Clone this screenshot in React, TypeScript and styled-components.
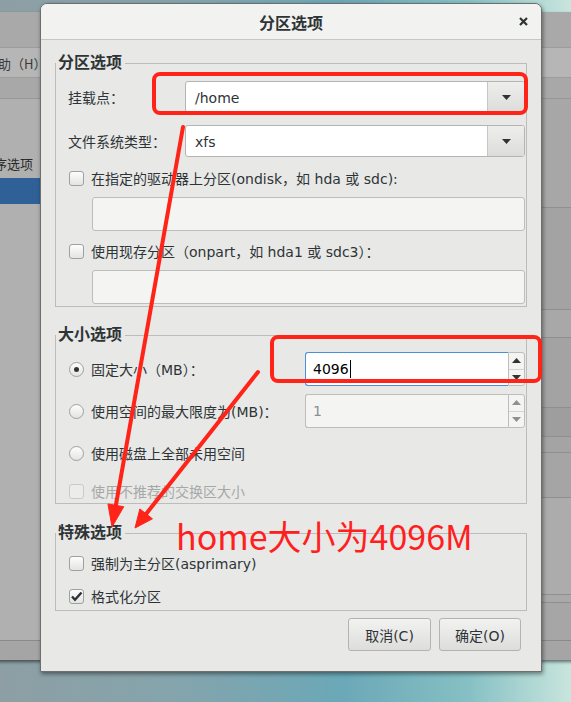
import React from "react";
import styled, { createGlobalStyle } from "styled-components";

const GlobalStyle = createGlobalStyle`
  html, body {
    margin: 0;
    padding: 0;
  }
  body {
    font-family: "DejaVu Sans", "Noto Sans CJK SC", sans-serif;
  }
`;

const Desktop = styled.div`
  position: relative;
  width: 571px;
  height: 702px;
  overflow: hidden;
  background: linear-gradient(90deg, #8d9fa4 0%, #85a4ac 30%, #6ba8b7 60%, #86c0c4 82%, #c8e5dd 100%);
`;

/* installer main window, mostly hidden behind the dialog */
const BackWindow = styled.div`
  position: absolute;
  left: -20px;
  top: 12px;
  width: 640px;
  height: 648px;
  display: flex;
  flex-direction: column;
  background: #aaaaaa;
  box-shadow: 0 2px 3px rgba(0, 0, 0, 0.5);
  font-family: "Noto Sans CJK SC", "DejaVu Sans", sans-serif;
  font-size: 13px;
  color: #333;
`;

const BackHeader = styled.div`
  height: 35px;
  background: #a9a9a9;
`;

const MenuBar = styled.div`
  height: 31px;
  box-sizing: border-box;
  padding: 2px 0 0 5px;
  display: flex;
  align-items: center;
  background: #b6b6b6;
  border-top: 1px solid #9c9c9c;
  border-bottom: 1px solid #9c9c9c;
  color: #3a3a3a;
`;

const ToolBand = styled.div`
  height: 21px;
  box-sizing: border-box;
  background: #a8a8a8;
  border-bottom: 1px solid #979797;
`;

const BackMain = styled.div`
  flex: 1;
  display: flex;
`;

const Sidebar = styled.div`
  width: 562px;
  padding-top: 51px;
  background: #b0b0b0;
`;

const ListRow = styled.div<{ $selected?: boolean }>`
  height: 26px;
  margin-bottom: 2px;
  padding-left: 1px;
  display: flex;
  align-items: center;
  background: ${(p) => (p.$selected ? "#2f6198" : "transparent")};
  color: ${(p) => (p.$selected ? "#fff" : "#2a2a2a")};
`;

const ContentPane = styled.div`
  flex: 1;
  display: flex;
  flex-direction: column;
  background: #a6a6a6;
`;

const PaneRow = styled.div<{ $h: number; $tone: string }>`
  height: ${(p) => p.$h}px;
  box-sizing: border-box;
  border-bottom: 1px solid #8f8f8f;
  background: ${(p) => p.$tone};
`;

const StatusBand = styled.div`
  height: 20px;
  box-sizing: border-box;
  background: #a5a5a5;
  border-top: 1px solid #8a8a8a;
`;

/* the dialog */
const Dialog = styled.div`
  position: absolute;
  left: 40px;
  top: 3px;
  width: 502px;
  height: 669px;
  box-sizing: border-box;
  display: flex;
  flex-direction: column;
  background: #e8e8e7;
  border: 1px solid #6e6e6e;
  border-radius: 7px 7px 0 0;
  box-shadow: 1px 2px 4px rgba(0, 0, 0, 0.45);
  overflow: hidden;
  color: #2e3436;
  font-size: 14px;
`;

const TitleBar = styled.div`
  height: 36px;
  box-sizing: border-box;
  display: grid;
  grid-template-columns: 1fr auto 1fr;
  align-items: center;
  background: #f2f2f1;
  border-bottom: 1px solid #c6c6c4;
`;

const TitleText = styled.div`
  grid-column: 2;
  font-size: 16px;
  font-weight: bold;
`;

const CloseButton = styled.div`
  grid-column: 3;
  justify-self: end;
  margin-right: 13px;
  display: flex;
`;

const DialogBody = styled.div`
  flex: 1;
  display: flex;
  flex-direction: column;
  padding: 14px 14px 0;
`;

const Frame = styled.fieldset<{ $mt?: number }>`
  margin: ${(p) => p.$mt ?? 0}px 0 0;
  padding: 0;
  min-width: 0;
  border: 1px solid #bcbcba;
`;

const FrameTitle = styled.legend`
  margin: 0;
  padding: 0 3px 0 2px;
  font-size: 16px;
  font-weight: bold;
  line-height: 18px;
`;

const FrameBody = styled.div<{ $pt: number; $pb: number }>`
  padding: ${(p) => p.$pt}px 1px ${(p) => p.$pb}px 12px;
`;

const FieldRow = styled.div<{ $label: number; $mt?: number }>`
  display: grid;
  grid-template-columns: ${(p) => p.$label}px 1fr;
  align-items: center;
  min-height: 32px;
  margin-top: ${(p) => p.$mt ?? 0}px;
`;

const OptionLine = styled.div<{ $disabled?: boolean }>`
  display: flex;
  align-items: center;
  gap: 7px;
  padding-left: 1px;
  color: ${(p) => (p.$disabled ? "#a6a8a8" : "#2e3436")};
`;

const CheckRow = styled(OptionLine)<{ $mt?: number }>`
  height: 22px;
  margin-top: ${(p) => p.$mt ?? 0}px;
`;

const CheckBox = styled.span<{ $disabled?: boolean }>`
  width: 15px;
  height: 15px;
  box-sizing: border-box;
  flex-shrink: 0;
  display: flex;
  align-items: center;
  justify-content: center;
  border: 1px solid ${(p) => (p.$disabled ? "#cacac8" : "#a0a09e")};
  border-radius: 3px;
  background: ${(p) => (p.$disabled ? "#ececeb" : "linear-gradient(#fdfdfd, #e4e4e3)")};
`;

const RadioBox = styled(CheckBox)`
  border-radius: 50%;
`;

const RadioDot = styled.span`
  width: 5px;
  height: 5px;
  border-radius: 50%;
  background: #2e3436;
`;

const Combo = styled.div`
  height: 32px;
  box-sizing: border-box;
  display: flex;
  border: 1px solid #b4b4b2;
  border-radius: 3px;
  background: #fff;
  overflow: hidden;
`;

const ComboValue = styled.div`
  flex: 1;
  display: flex;
  align-items: center;
  padding: 1px 0 0 9px;
`;

const ComboButton = styled.div`
  width: 36px;
  display: flex;
  align-items: center;
  justify-content: center;
  border-left: 1px solid #c6c6c4;
  background: linear-gradient(#eeeeed, #dcdcdb);
`;

const Entry = styled.div<{ $mt: number }>`
  height: 34px;
  margin: ${(p) => p.$mt}px 0 0 24px;
  box-sizing: border-box;
  border: 1px solid #bdbdbb;
  border-radius: 3px;
  background: #f4f4f3;
`;

const SpinBox = styled.div`
  height: 34px;
  display: flex;
`;

const SpinField = styled.div<{ $focused?: boolean }>`
  flex: 1;
  box-sizing: border-box;
  display: flex;
  align-items: center;
  padding-left: 7px;
  border: 1px solid ${(p) => (p.$focused ? "#4a90d9" : "#bdbdbb")};
  border-right: none;
  border-radius: 3px 0 0 3px;
  background: ${(p) => (p.$focused ? "#fff" : "#f4f4f3")};
  color: ${(p) => (p.$focused ? "#000" : "#8b8e8f")};
`;

const SpinButtons = styled.div`
  width: 17px;
  box-sizing: border-box;
  display: flex;
  flex-direction: column;
  border: 1px solid #bdbdbb;
  border-radius: 0 3px 3px 0;
  background: #f4f4f3;
`;

const SpinHalf = styled.div`
  flex: 1;
  display: flex;
  align-items: center;
  justify-content: center;
  & + & {
    border-top: 1px solid #d4d4d2;
  }
`;

const Caret = styled.span`
  width: 1px;
  height: 18px;
  margin-left: 1px;
  background: #000;
`;

const ButtonRow = styled.div`
  display: flex;
  justify-content: flex-end;
  gap: 8px;
  margin-top: 7px;
  padding-right: 6px;
`;

const PushButton = styled.div<{ $w: number }>`
  width: ${(p) => p.$w}px;
  height: 33px;
  box-sizing: border-box;
  display: flex;
  align-items: center;
  justify-content: center;
  border: 1px solid #b3b3b1;
  border-radius: 3px;
  background: linear-gradient(#f2f2f1, #dddddc);
  color: #2e3436;
`;

/* red annotations drawn over the screenshot */
const Annotations = styled.svg`
  position: absolute;
  left: 0;
  top: 0;
  pointer-events: none;
`;

const AnnotationText = styled.span`
  position: absolute;
  left: 176px;
  top: 521px;
  font-family: "Noto Sans CJK SC", "DejaVu Sans", sans-serif;
  font-size: 34px;
  line-height: 30px;
  color: #ff1f1f;
  white-space: nowrap;
`;

const Triangle = ({ up, color = "#2e3436" }: { up?: boolean; color?: string }) => (
  <svg width="9" height="5" viewBox="0 0 9 5">
    <path d={up ? "M0 5 L4.5 0 L9 5 Z" : "M0 0 L9 0 L4.5 5 Z"} fill={color} />
  </svg>
);

const CheckMark = () => (
  <svg width="13" height="13" viewBox="0 0 13 13">
    <path d="M2 6.5 L5 9.8 L11.5 2.5" fill="none" stroke="#2e3436" strokeWidth="2.4" />
  </svg>
);

const CloseIcon = () => (
  <svg width="9" height="9" viewBox="0 0 9 9">
    <path d="M1 1 L8 8 M8 1 L1 8" stroke="#2e3436" strokeWidth="2.2" />
  </svg>
);

const Arrow = ({ from, tip, len, half }: { from: [number, number]; tip: [number, number]; len: number; half: number }) => {
  const dx = tip[0] - from[0];
  const dy = tip[1] - from[1];
  const d = Math.hypot(dx, dy);
  const ux = dx / d;
  const uy = dy / d;
  const bx = tip[0] - ux * len;
  const by = tip[1] - uy * len;
  const nx = -uy;
  const ny = ux;
  const head = `${tip[0]},${tip[1]} ${bx + nx * half},${by + ny * half} ${bx - nx * half},${by - ny * half}`;
  return (
    <g fill="#ff2318" stroke="#ff2318">
      <line x1={from[0]} y1={from[1]} x2={bx + ux * 2} y2={by + uy * 2} strokeWidth="4" strokeLinecap="round" />
      <polygon points={head} strokeWidth="1" strokeLinejoin="round" />
    </g>
  );
};

const paneRows: [number, string][] = [
  [109, "#a7a7a7"],
  [102, "#a3a3a3"],
  [28, "#a8a8a8"],
  [70, "#a3a3a3"],
  [29, "#9e9e9e"],
  [16, "#a4a4a4"],
  [45, "#a5a5a5"],
  [97, "#acacac"],
  [8, "#a9a9a9"],
];

export default function App() {
  return (
    <Desktop>
      <GlobalStyle />
      <BackWindow>
        <BackHeader />
        <MenuBar>帮助（H）</MenuBar>
        <ToolBand />
        <BackMain>
          <Sidebar>
            <ListRow>程序选项</ListRow>
            <ListRow $selected />
          </Sidebar>
          <ContentPane>
            {paneRows.map(([h, tone], i) => (
              <PaneRow key={i} $h={h} $tone={tone} />
            ))}
          </ContentPane>
        </BackMain>
        <StatusBand />
      </BackWindow>

      <Dialog>
        <TitleBar>
          <TitleText>分区选项</TitleText>
          <CloseButton>
            <CloseIcon />
          </CloseButton>
        </TitleBar>

        <DialogBody>
          <Frame>
            <FrameTitle>分区选项</FrameTitle>
            <FrameBody $pt={9} $pb={2}>
              <FieldRow $label={117}>
                <span>挂载点：</span>
                <Combo>
                  <ComboValue>/home</ComboValue>
                  <ComboButton>
                    <Triangle />
                  </ComboButton>
                </Combo>
              </FieldRow>
              <FieldRow $label={117} $mt={12}>
                <span>文件系统类型：</span>
                <Combo>
                  <ComboValue>xfs</ComboValue>
                  <ComboButton>
                    <Triangle />
                  </ComboButton>
                </Combo>
              </FieldRow>
              <CheckRow $mt={10}>
                <CheckBox />
                在指定的驱动器上分区(ondisk，如 hda 或 sdc):
              </CheckRow>
              <Entry $mt={8} />
              <CheckRow $mt={9}>
                <CheckBox />
                使用现存分区（onpart，如 hda1 或 sdc3）：
              </CheckRow>
              <Entry $mt={8} />
            </FrameBody>
          </Frame>

          <Frame $mt={19}>
            <FrameTitle>大小选项</FrameTitle>
            <FrameBody $pt={8} $pb={1}>
              <FieldRow $label={237}>
                <OptionLine>
                  <RadioBox>
                    <RadioDot />
                  </RadioBox>
                  固定大小（MB）：
                </OptionLine>
                <SpinBox>
                  <SpinField $focused>
                    4096
                    <Caret />
                  </SpinField>
                  <SpinButtons>
                    <SpinHalf>
                      <Triangle up />
                    </SpinHalf>
                    <SpinHalf>
                      <Triangle />
                    </SpinHalf>
                  </SpinButtons>
                </SpinBox>
              </FieldRow>
              <FieldRow $label={237} $mt={8}>
                <OptionLine>
                  <RadioBox />
                  使用空间的最大限度为(MB)：
                </OptionLine>
                <SpinBox>
                  <SpinField>1</SpinField>
                  <SpinButtons>
                    <SpinHalf>
                      <Triangle up color="#8e9192" />
                    </SpinHalf>
                    <SpinHalf>
                      <Triangle color="#8e9192" />
                    </SpinHalf>
                  </SpinButtons>
                </SpinBox>
              </FieldRow>
              <FieldRow $label={237} $mt={8} style={{ height: 34 }}>
                <OptionLine>
                  <RadioBox />
                  使用磁盘上全部未用空间
                </OptionLine>
              </FieldRow>
              <CheckRow $mt={10} $disabled>
                <CheckBox $disabled />
                使用不推荐的交换区大小
              </CheckRow>
            </FrameBody>
          </Frame>

          <Frame $mt={20}>
            <FrameTitle>特殊选项</FrameTitle>
            <FrameBody $pt={10} $pb={3}>
              <CheckRow>
                <CheckBox />
                强制为主分区(asprimary)
              </CheckRow>
              <CheckRow $mt={11}>
                <CheckBox>
                  <CheckMark />
                </CheckBox>
                格式化分区
              </CheckRow>
            </FrameBody>
          </Frame>

          <ButtonRow>
            <PushButton $w={83}>取消(C)</PushButton>
            <PushButton $w={82}>确定(O)</PushButton>
          </ButtonRow>
        </DialogBody>
      </Dialog>

      <Annotations width="571" height="702" viewBox="0 0 571 702">
        <rect x="154" y="74" width="372" height="39" rx="6" fill="none" stroke="#ff2318" strokeWidth="4" />
        <rect x="272" y="337" width="268" height="44" rx="6" fill="none" stroke="#ff2318" strokeWidth="4" />
        <Arrow from={[183, 127]} tip={[112, 527]} len={22} half={8} />
        <Arrow from={[258, 372]} tip={[135, 528]} len={18} half={8} />
      </Annotations>
      <AnnotationText>home大小为4096M</AnnotationText>
    </Desktop>
  );
}
